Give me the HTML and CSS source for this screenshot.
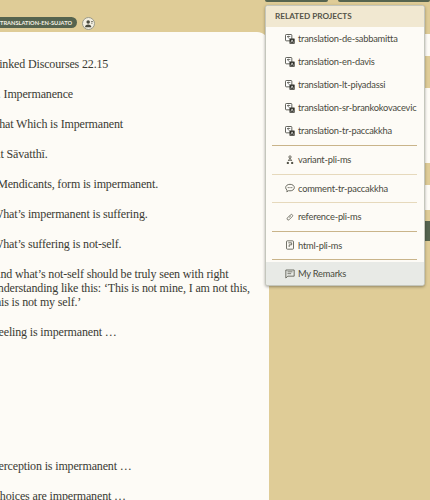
FILE: index.html
```html
<!DOCTYPE html>
<html lang="en">
<head>
    <meta charset="UTF-8">
    <meta name="viewport" content="width=device-width, initial-scale=1.0">
    <title>Related Projects</title>
    <link rel="stylesheet" href="styles.css">
</head>
<body>
    <div class="page">
        <div class="project-bar">
            <span class="project-pill">translation-en-sujato</span>
            <span class="owner-badge">
                <svg viewBox="0 0 12 12" width="10" height="10"><circle cx="5" cy="3.600" r="2.100" fill="#4a4a3e"/><path d="M1.200 10c0-2.400 1.700-3.400 3.800-3.400s3.800 1 3.800 3.400z" fill="#4a4a3e"/><path d="M8.600 3h2M8.600 5h1.600" stroke="#4a4a3e" stroke-width="0.900"/></svg>
            </span>
        </div>
        <div class="text-card">
            <p>Linked Discourses 22.15</p>
            <p>1. Impermanence</p>
            <p>That Which is Impermanent</p>
            <p>At Sāvatthī.</p>
            <p>“Mendicants, form is impermanent.</p>
            <p>What’s impermanent is suffering.</p>
            <p>What’s suffering is not-self.</p>
            <p>And what’s not-self should be truly seen with right<br>understanding like this: ‘This is not mine, I am not this,<br>this is not my self.’</p>
            <p class="gap-after">Feeling is impermanent …</p>
            <p>Perception is impermanent …</p>
            <p>Choices are impermanent …</p>
        </div>
    </div>

    <div class="top-tabs">
        <span class="tab-left"></span>
        <span class="tab-right"></span>
    </div>

    <div class="side-strip">
        <span class="strip-tan tan-1"></span>
        <span class="strip-light light-1"></span>
        <span class="strip-tan tan-2"></span>
        <span class="strip-light light-2"></span>
        <span class="strip-tan tan-3"></span>
        <span class="strip-light light-3"></span>
        <span class="strip-tan tan-4"></span>
        <span class="strip-light light-4"></span>
        <span class="strip-tan tan-5"></span>
        <span class="strip-green"></span>
    </div>

    <div class="related-menu">
        <h3>Related Projects</h3>
        <ul class="menu-group group-top">
            <li><svg class="icon" viewBox="0 0 12 12"><use href="#translate"/></svg>translation-de-sabbamitta</li>
            <li><svg class="icon" viewBox="0 0 12 12"><use href="#translate"/></svg>translation-en-davis</li>
            <li><svg class="icon" viewBox="0 0 12 12"><use href="#translate"/></svg>translation-lt-piyadassi</li>
            <li><svg class="icon" viewBox="0 0 12 12"><use href="#translate"/></svg>translation-sr-brankokovacevic</li>
            <li><svg class="icon" viewBox="0 0 12 12"><use href="#translate"/></svg>translation-tr-paccakkha</li>
        </ul>
        <ul class="menu-group thin">
            <li><svg class="icon" viewBox="0 0 12 12"><circle cx="6" cy="2.400" r="1.400" fill="none" stroke="#55554a"/><path d="M6 3.800 3.600 7.400M6 3.800 8.400 7.400M4.500 6.400h3" fill="none" stroke="#55554a"/><path d="M2.200 10.800V8.400h2.400v2.400zM7.400 10.800V8.400h2.400v2.400z" fill="#55554a"/></svg>variant-pli-ms</li>
        </ul>
        <ul class="menu-group thin">
            <li><svg class="icon" viewBox="0 0 12 12"><path d="M6 1.600c3 0 5.200 1.600 5.200 3.900S9 9.400 6 9.400c-.6 0-1.100 0-1.600-.2L2.200 10.600l.3-2.100C1.400 7.800.8 6.700.8 5.500.8 3.200 3 1.600 6 1.600z" fill="none" stroke="#55554a"/><circle cx="3.800" cy="5.500" r=".7" fill="#55554a"/><circle cx="6" cy="5.500" r=".7" fill="#55554a"/><circle cx="8.200" cy="5.500" r=".7" fill="#55554a"/></svg>comment-tr-paccakkha</li>
        </ul>
        <ul class="menu-group">
            <li><svg class="icon" viewBox="0 0 12 12"><path d="M2.800 7.200 6.800 3.200a1.500 1.500 0 0 1 2.100 2.100L4.900 9.300a1.500 1.500 0 0 1-2.100-2.100z" fill="none" stroke="#66665a"/><path d="M5 6.500 7 4.600" stroke="#66665a"/></svg>reference-pli-ms</li>
        </ul>
        <ul class="menu-group">
            <li><svg class="icon" viewBox="0 0 12 12"><rect x="1.800" y="1" width="8.400" height="10" rx="1" fill="none" stroke="#55554a"/><path d="M4 3.400h4v2.400H5v2.600" fill="none" stroke="#55554a"/></svg>html-pli-ms</li>
        </ul>
        <div class="my-remarks"><svg class="icon" viewBox="0 0 12 12"><path d="M1 1.200h10v7.400H3.400L1 10.800z" fill="none" stroke="#55554a"/><path d="M3 3.400h6M3 5.600h4.400" stroke="#55554a" stroke-width=".9"/></svg>My Remarks</div>
    </div>

    <svg class="icon-defs" width="0" height="0">
        <symbol id="translate" viewBox="0 0 12 12">
            <rect x=".6" y=".6" width="7.600" height="7.600" rx="1" fill="#fff" stroke="#45453c"/>
            <rect x="5.400" y="5.400" width="6.200" height="6.200" rx=".6" fill="#2f2f28"/>
            <path d="M2.400 3h4M4.400 2v1M3 3c.4 1.400 1.400 2.200 2.600 2.600" fill="none" stroke="#45453c" stroke-width=".8"/>
            <path d="M7 10.400l1.500-3.400 1.500 3.400" fill="none" stroke="#fff" stroke-width=".8"/>
        </symbol>
    </svg>
</body>
</html>
```

FILE: styles.css
```css
html, body {
    margin: 0;
    padding: 0;
    height: 500px;
    overflow: hidden;
}
body {
    position: relative;
    background-color: #dfcc97;
}
.page {
    width: 269px;
}
.project-bar {
    height: 32px;
    display: flex;
    align-items: flex-start;
    gap: 5px;
    padding-top: 17px;
    box-sizing: border-box;
    margin-left: -40px;
}
.project-pill {
    height: 11px;
    line-height: 11px;
    padding: 0 5px 0 40px;
    background-color: #56644f;
    border-radius: 6px;
    color: #f4f1e4;
    font-family: "Lato", sans-serif;
    font-size: 5.700px;
    font-weight: 700;
    text-transform: uppercase;
    white-space: nowrap;
}
.owner-badge {
    width: 11px;
    height: 11px;
    display: flex;
    align-items: center;
    justify-content: center;
    background-color: #f3efe2;
    border: 0.5px solid #9a9a8a;
    border-radius: 50%;
}
.text-card {
    height: 468px;
    box-sizing: border-box;
    margin-left: -20px;
    padding: 25px 0 0 12px;
    background-color: #fdfbf6;
    border-top-right-radius: 12px;
    font-family: "Liberation Serif", serif;
    font-size: 12px;
    letter-spacing: -0.15px;
    line-height: 14px;
    color: #3a3a33;
    white-space: nowrap;
}
.text-card p {
    margin: 0 0 16px;
}
.text-card .gap-after {
    margin-bottom: 120px;
}
.top-tabs {
    position: absolute;
    top: 0;
    left: 265px;
    right: 0;
    display: flex;
    gap: 10px;
}
.tab-left, .tab-right {
    height: 2px;
    background-color: #56644f;
    border-radius: 0 0 2px 2px;
}
.tab-left { width: 63px; }
.tab-right { flex: 1; }
.side-strip {
    position: absolute;
    top: 2px;
    right: 0;
    width: 5px;
    display: flex;
    flex-direction: column;
}
.strip-tan { background-color: #dfcc97; }
.strip-light { background-color: #fdfbf6; }
.tan-1 { height: 32px; }
.light-1 { height: 22px; }
.tan-2 { height: 32px; }
.light-2 { height: 50px; }
.tan-3 { height: 0; }
.light-3 { height: 25px; }
.tan-4 { height: 22px; }
.light-4 { height: 25px; }
.tan-5 { height: 11px; }
.strip-green { height: 20px; background-color: #56644f; }
.related-menu {
    position: absolute;
    top: 5px;
    left: 265px;
    width: 160px;
    box-sizing: border-box;
    background-color: #fdfbf6;
    border: 1px solid #c4c6bc;
    border-radius: 3px;
    box-shadow: 0 1px 3px rgba(0,0,0,0.35);
    font-family: "Lato", sans-serif;
    font-size: 9.300px;
    letter-spacing: -0.22px;
    color: #4a4a40;
    overflow: hidden;
}
.related-menu h3 {
    margin: 0;
    height: 21px;
    padding: 0 9px;
    line-height: 21px;
    background-color: #f1e8d1;
    font-size: 8.200px;
    font-weight: 700;
    letter-spacing: 0;
    text-transform: uppercase;
    color: #55554a;
}
.menu-group {
    list-style: none;
    margin: 0 7px 0 6px;
    padding: 0;
    border-bottom: 1px solid #c9b48a;
}
.menu-group.thin {
    border-bottom-color: #e6d9bc;
}
.menu-group li {
    display: flex;
    align-items: center;
    gap: 3px;
    height: 27.500px;
    padding-left: 13px;
    white-space: nowrap;
}
.group-top {
    padding-bottom: 3px;
}
.group-top li {
    height: 23px;
}
.icon {
    width: 10px;
    height: 10px;
    flex: none;
}
.my-remarks {
    display: flex;
    align-items: center;
    gap: 3px;
    height: 23px;
    margin-top: 2px;
    padding-left: 19px;
    background-color: #e8eae6;
}
.icon-defs {
    position: absolute;
}
```
